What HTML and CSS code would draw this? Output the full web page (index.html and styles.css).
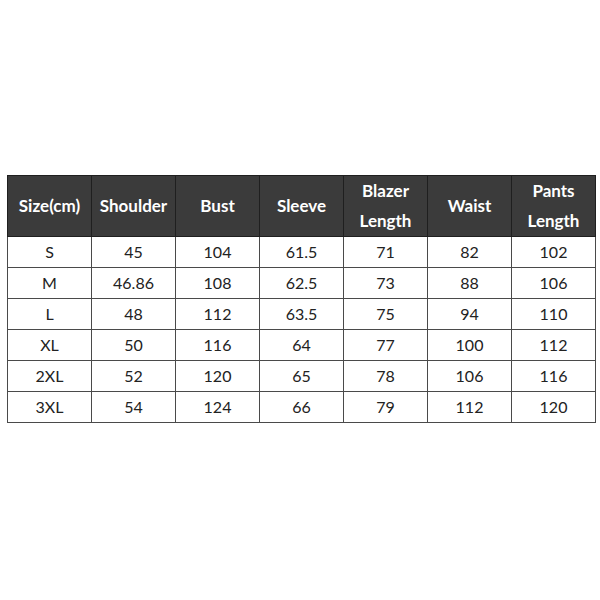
FILE: index.html
```html
<!DOCTYPE html>
<html>
<head>
<meta charset="utf-8">
<link rel="stylesheet" href="styles.css">
</head>
<body>
<div class="page">
  <table class="size-table">
    <colgroup>
      <col class="col"><col class="col"><col class="col"><col class="col"><col class="col"><col class="col"><col class="col">
    </colgroup>
    <thead>
      <tr>
        <th>Size(cm)</th>
        <th>Shoulder</th>
        <th>Bust</th>
        <th>Sleeve</th>
        <th>Blazer<br>Length</th>
        <th>Waist</th>
        <th>Pants<br>Length</th>
      </tr>
    </thead>
    <tbody>
      <tr><td>S</td><td>45</td><td>104</td><td>61.5</td><td>71</td><td>82</td><td>102</td></tr>
      <tr><td>M</td><td>46.86</td><td>108</td><td>62.5</td><td>73</td><td>88</td><td>106</td></tr>
      <tr><td>L</td><td>48</td><td>112</td><td>63.5</td><td>75</td><td>94</td><td>110</td></tr>
      <tr><td>XL</td><td>50</td><td>116</td><td>64</td><td>77</td><td>100</td><td>112</td></tr>
      <tr><td>2XL</td><td>52</td><td>120</td><td>65</td><td>78</td><td>106</td><td>116</td></tr>
      <tr><td>3XL</td><td>54</td><td>124</td><td>66</td><td>79</td><td>112</td><td>120</td></tr>
    </tbody>
  </table>
</div>
</body>
</html>
```
FILE: styles.css
```css
html, body {
  margin: 0;
  padding: 0;
  background: #ffffff;
}
.page {
  width: 600px;
  height: 600px;
  padding: 175px 0 0 7px;
  box-sizing: border-box;
}
.size-table {
  border-collapse: collapse;
  table-layout: fixed;
  width: 588px;
  font-family: Lato, "Open Sans", sans-serif;
}
.col {
  width: 84px;
}
.size-table th,
.size-table td {
  padding: 0;
  text-align: center;
  vertical-align: middle;
  border: 1px solid #4a4a4a;
}
.size-table th {
  height: 59px;
  background: #3b3b3b;
  color: #ffffff;
  font-weight: 700;
  font-size: 17px;
  line-height: 30px;
  border-color: #1f1f1f;
}
.size-table td {
  height: 30px;
  color: #222222;
  font-size: 16px;
  font-weight: 400;
  line-height: 20px;
}
```
